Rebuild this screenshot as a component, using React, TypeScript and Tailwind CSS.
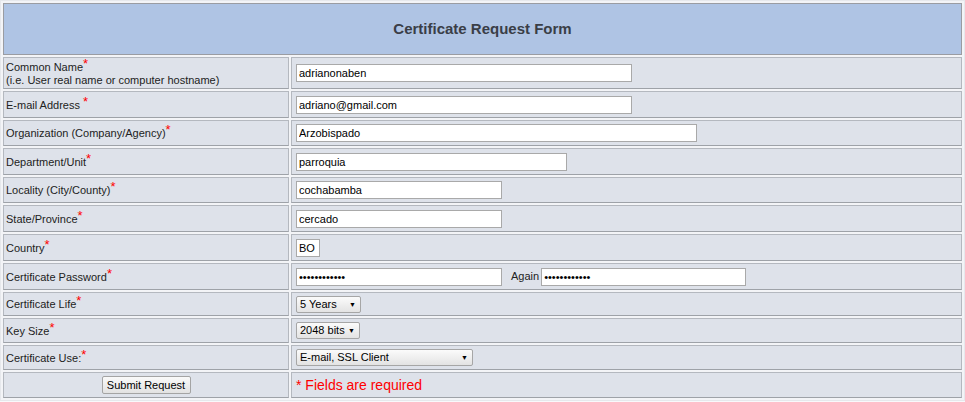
import React from "react";

const font = { fontFamily: '"Liberation Sans", Arial, sans-serif' };

function Req() {
  return <span className="relative -top-[3px] text-[13px] leading-none text-[#ff0000]">*</span>;
}

function Label({ children, space }: { children: React.ReactNode; space?: boolean }) {
  return (
    <>
      {children}
      {space ? " " : ""}
      <Req />
    </>
  );
}

function TextInput({ value, width, type = "text" }: { value: string; width: string; type?: string }) {
  return (
    <input
      type={type}
      defaultValue={value}
      className={`${width} h-[18px] border border-[#a9a9a9] bg-white px-[2px] text-[11px] text-black outline-none`}
      style={font}
    />
  );
}

function Select({ value, width }: { value: string; width: string }) {
  return (
    <span className={`relative inline-flex ${width} h-[17px] items-center rounded-[2px] border border-[#a6a6a6] bg-gradient-to-b from-[#fbfbfb] to-[#e3e3e3] pl-[3px] text-[11px] text-black`}>
      {value}
      <span className="absolute right-[4px] top-[3px] text-[7px]">▼</span>
    </span>
  );
}

const labelCell = "border border-[#b4b8bf] border-b-[#9ea2a8] bg-[#dee2ea] px-[2px] text-[11px] leading-[13px] text-[#222]";
const valueCell = "border border-[#b4b8bf] border-b-[#9ea2a8] bg-[#dee2ea] pl-[4px] text-[11px] text-[#222]";

const rows: { label: React.ReactNode; field: React.ReactNode; h: string }[] = [
  { h: "h-[27px]", label: <Label space>E-mail Address</Label>, field: <TextInput value="adriano@gmail.com" width="w-[336px]" /> },
  { h: "h-[26px]", label: <Label>Organization (Company/Agency)</Label>, field: <TextInput value="Arzobispado" width="w-[401px]" /> },
  { h: "h-[27px]", label: <Label>Department/Unit</Label>, field: <TextInput value="parroquia" width="w-[271px]" /> },
  { h: "h-[26px]", label: <Label>Locality (City/County)</Label>, field: <TextInput value="cochabamba" width="w-[206px]" /> },
  { h: "h-[27px]", label: <Label>State/Province</Label>, field: <TextInput value="cercado" width="w-[206px]" /> },
  { h: "h-[27px]", label: <Label>Country</Label>, field: <TextInput value="BO" width="w-[24px]" /> },
  {
    h: "h-[27px]",
    label: <Label>Certificate Password</Label>,
    field: (
      <span className="flex items-center">
        <TextInput type="password" value="adrianonaben" width="w-[206px]" />
        <span className="ml-[9px] mr-[2px] text-[11px]">Again</span>
        <TextInput type="password" value="adrianonaben" width="w-[205px]" />
      </span>
    ),
  },
  { h: "h-[24px]", label: <Label>Certificate Life</Label>, field: <Select value="5 Years" width="w-[65px]" /> },
  { h: "h-[25px]", label: <Label>Key Size</Label>, field: <Select value="2048 bits" width="w-[64px]" /> },
  { h: "h-[25px]", label: <Label>Certificate Use:</Label>, field: <Select value="E-mail, SSL Client" width="w-[177px]" /> },
];

export default function App() {
  return (
    <div className="min-h-[402px] bg-[#f8f9fb]" style={font}>
      <table className="w-[965px] border-separate border-spacing-[2px] border border-[#e6e8ec] bg-[#f3f4f7]">
        <tbody>
          <tr>
            <th
              colSpan={2}
              className="h-[52px] border border-[#9a9ca2] bg-[#afc4e4] text-center text-[15px] font-bold text-[#3a3e47]"
            >
              Certificate Request Form
            </th>
          </tr>
          <tr>
            <td className={`${labelCell} h-[32px] w-[286px]`}>
              <Label>Common Name</Label>
              <br />
              (i.e. User real name or computer hostname)
            </td>
            <td className={valueCell}>
              <TextInput value="adrianonaben" width="w-[336px]" />
            </td>
          </tr>
          {rows.map((row, i) => (
            <tr key={"row-" + i}>
              <td className={`${labelCell} ${row.h}`}>{row.label}</td>
              <td className={`${valueCell} ${row.h}`}>
                <div className="flex items-center">{row.field}</div>
              </td>
            </tr>
          ))}
          <tr>
            <td className={`${labelCell} h-[26px] text-center`}>
              <button className="h-[18px] w-[89px] rounded-[2px] border border-[#a4a4a4] bg-gradient-to-b from-[#fafafa] to-[#e2e2e2] text-[11px] text-black">
                Submit Request
              </button>
            </td>
            <td className={`${valueCell} h-[26px] pl-[2px] text-[14px] text-[#ff0000]`}>* Fields are required</td>
          </tr>
        </tbody>
      </table>
    </div>
  );
}
